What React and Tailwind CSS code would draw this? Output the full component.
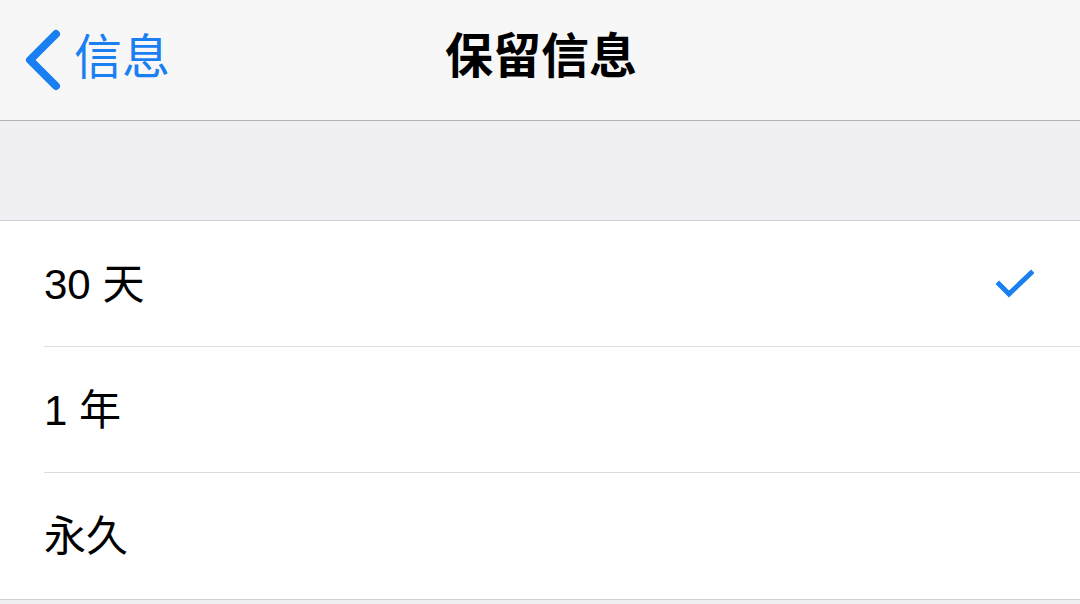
export default function App() {
  const options = [
    { label: "30 天", checked: true },
    { label: "1 年", checked: false },
    { label: "永久", checked: false },
  ];

  return (
    <div
      className="w-[1080px] h-[604px] bg-[#efeff4] overflow-hidden"
      style={{ fontFamily: '"Liberation Sans", "Noto Sans CJK SC", sans-serif' }}
    >
      {/* Nav bar */}
      <div className="relative h-[121px] bg-[#f7f7f7] border-b border-[#b2b2b2] flex items-center justify-center">
        <div className="absolute left-[22px] top-0 h-full flex items-center gap-[10px] text-[#1a7ff0]">
          <svg width="42" height="64" viewBox="0 0 42 64" fill="none">
            <path
              d="M34 6 L8 32 L34 58"
              stroke="#1a7ff0"
              strokeWidth="8"
              strokeLinecap="round"
              strokeLinejoin="round"
            />
          </svg>
          <span className="text-[48px] leading-none pb-[4px]">信息</span>
        </div>
        <span className="text-[48px] font-bold text-black leading-none pb-[6px] ml-[2px]">保留信息</span>
      </div>

      {/* Spacer */}
      <div className="h-[100px] border-b border-[#cfcfd4]" />

      {/* Options */}
      <div className="bg-white border-b border-[#cfcfd4]">
        {options.map((o, i) => (
          <div key={o.label} className="pl-[44px]">
            <div
              className={
                "h-[126px] pr-[46px] flex items-center justify-between " +
                (i < options.length - 1 ? "border-b border-[#dcdce0]" : "")
              }
            >
              <span className="text-[42px] text-black leading-none pt-[2px]">{o.label}</span>
              {o.checked && (
                <svg width="38" height="30" viewBox="0 0 38 30" fill="none">
                  <path
                    d="M3 15 L13 25 L35 4"
                    stroke="#1a7ff0"
                    strokeWidth="5"
                    strokeLinecap="square"
                  />
                </svg>
              )}
            </div>
          </div>
        ))}
      </div>
    </div>
  );
}
